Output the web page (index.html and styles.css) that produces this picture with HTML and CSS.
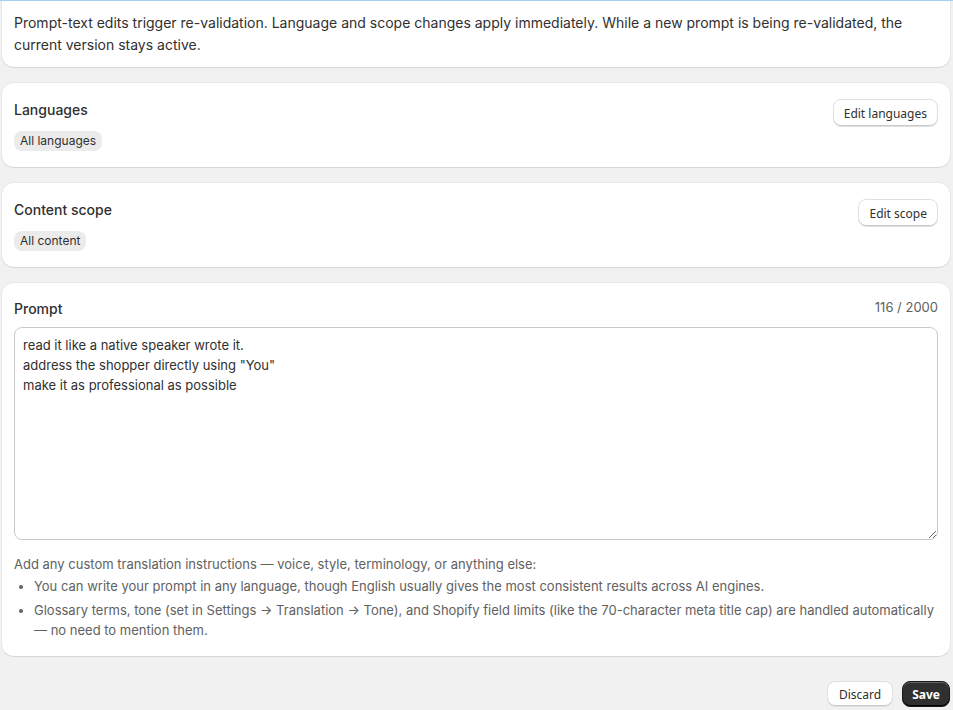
FILE: index.html
```html
<!doctype html>
<html>
<head>
	<meta charset="utf-8">
	<title>Custom prompt</title>
	<link rel="stylesheet" href="styles.css">
</head>
<body>
	<div class="page">
		<div class="card notice">
			<p>Prompt-text edits trigger re-validation. Language and scope changes apply immediately. While a new prompt is being re-validated, the current version stays active.</p>
		</div>

		<div class="card section">
			<div class="section-info">
				<h2>Languages</h2>
				<span class="chip">All languages</span>
			</div>
			<button class="btn">Edit languages</button>
		</div>

		<div class="card section">
			<div class="section-info">
				<h2>Content scope</h2>
				<span class="chip">All content</span>
			</div>
			<button class="btn">Edit scope</button>
		</div>

		<div class="card prompt">
			<div class="prompt-head">
				<h2>Prompt</h2>
				<span class="counter">116 / 2000</span>
			</div>
			<textarea class="prompt-input">read it like a native speaker wrote it.
address the shopper directly using "You"
make it as professional as possible</textarea>
			<p class="help">Add any custom translation instructions — voice, style, terminology, or anything else:</p>
			<ul class="help-list">
				<li>You can write your prompt in any language, though English usually gives the most consistent results across AI engines.</li>
				<li>Glossary terms, tone (set in Settings → Translation → Tone), and Shopify field limits (like the 70-character meta title cap) are handled automatically — no need to mention them.</li>
			</ul>
		</div>

		<div class="actions">
			<button class="btn">Discard</button>
			<button class="btn primary">Save</button>
		</div>
	</div>
</body>
</html>
```
FILE: styles.css
```css
html, body {
	margin: 0;
	padding: 0;
}
body {
	background-color: #f1f1f1;
	border-top: 1px solid #a9d0ee;
	font-family: Inter, "Liberation Sans", sans-serif;
	font-size: 13px;
	color: #303030;
}
.page {
	display: flex;
	flex-direction: column;
	gap: 16px;
	padding: 0 3px 0 2px;
}
.card {
	background-color: #fff;
	border-radius: 12px;
	box-shadow: 0 1px 0 rgba(0, 0, 0, 0.08), 0 0 0 1px rgba(0, 0, 0, 0.03);
	padding: 16px 12px;
}
h2 {
	margin: 0;
	font-size: 14px;
	font-weight: 500;
	line-height: 20px;
}
.notice {
	border-radius: 0 0 12px 12px;
	padding: 11px 12px 11px;
}
.notice p {
	margin: 0;
	font-size: 14px;
	line-height: 22px;
}
.section {
	display: flex;
	justify-content: space-between;
	align-items: flex-start;
	padding: 17px 12px 16px;
}
.section .btn {
	margin-top: -1px;
}
.section-info {
	display: flex;
	flex-direction: column;
	align-items: flex-start;
	gap: 11px;
}
.chip {
	background-color: #ebebeb;
	border-radius: 8px;
	padding: 0 6px;
	font-size: 12px;
	line-height: 20px;
}
.btn {
	font-family: "Noto Sans", "Open Sans", sans-serif;
	font-size: 12px;
	font-weight: 400;
	color: #303030;
	background-color: #fff;
	border: 1px solid #e0e0e0;
	border-radius: 8px;
	box-shadow: inset 0 -1px 0 #c8c8c8;
	height: 28px;
	padding: 0 10px;
	margin: 0;
}
.prompt-head {
	display: flex;
	justify-content: space-between;
	align-items: center;
}
.counter {
	color: #616161;
	font-size: 13px;
	line-height: 20px;
	margin-top: -4px;
}
.prompt-input {
	display: block;
	box-sizing: border-box;
	width: 100%;
	height: 213px;
	margin-top: 8px;
	padding: 7px 8px;
	border: 1px solid #c9c9c9;
	border-radius: 8px;
	font-family: Inter, "Liberation Sans", sans-serif;
	font-size: 13px;
	line-height: 20px;
	color: #303030;
	resize: vertical;
}
.help {
	margin: 14px 0 2px;
	color: #616161;
	line-height: 20px;
}
.help-list {
	margin: 0;
	padding-left: 20px;
	color: #616161;
	line-height: 20px;
}
.help-list li + li {
	margin-top: 4px;
}
.actions {
	display: flex;
	justify-content: flex-end;
	gap: 9px;
	margin-top: 9px;
}
.actions .btn {
	height: 26px;
	padding: 0 11px;
}
.btn.primary {
	background-color: #303030;
	border-color: #1a1a1a;
	color: #fff;
	font-weight: 700;
	padding: 0 9px;
	box-shadow: inset 0 1px 0 rgba(255, 255, 255, 0.25), inset 0 -1px 0 #000;
}
```
